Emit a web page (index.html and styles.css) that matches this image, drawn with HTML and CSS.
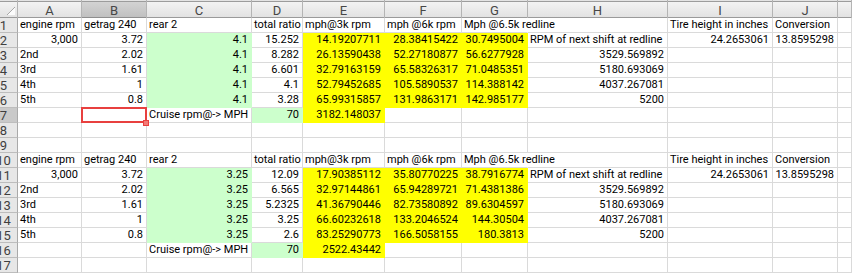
FILE: index.html
```html
<!DOCTYPE html>
<html>
<head>
<meta charset="utf-8">
<link rel="stylesheet" href="styles.css">
</head>
<body>
<div class="sheet">
  <div class="corner"><i class="tri"></i></div>
  <div class="hd">A</div><div class="hd on">B</div><div class="hd">C</div><div class="hd">D</div><div class="hd">E</div><div class="hd">F</div><div class="hd">G</div><div class="hd">H</div><div class="hd">I</div><div class="hd">J</div><div class="hd"></div>

  <div class="rh"><span>1</span></div>
  <div class="c">engine rpm</div><div class="c">getrag 240</div><div class="c">rear 2</div><div class="c">total ratio</div><div class="c">mph@3k rpm</div><div class="c">mph @6k rpm</div><div class="c spill">Mph @6.5k redline</div><div class="c"></div><div class="c">Tire height in inches</div><div class="c">Conversion</div><div class="c"></div>

  <div class="rh"><span>2</span></div>
  <div class="c n">3,000</div><div class="c n">3.72</div><div class="c n g">4.1</div><div class="c n">15.252</div><div class="c n y">14.19207711</div><div class="c n y">28.38415422</div><div class="c n y">30.7495004</div><div class="c">RPM of next shift at redline</div><div class="c n">24.2653061</div><div class="c n">13.8595298</div><div class="c"></div>

  <div class="rh"><span>3</span></div>
  <div class="c">2nd</div><div class="c n">2.02</div><div class="c n g">4.1</div><div class="c n">8.282</div><div class="c n y">26.13590438</div><div class="c n y">52.27180877</div><div class="c n y">56.6277928</div><div class="c n">3529.569892</div><div class="c"></div><div class="c"></div><div class="c"></div>

  <div class="rh"><span>4</span></div>
  <div class="c">3rd</div><div class="c n">1.61</div><div class="c n g">4.1</div><div class="c n">6.601</div><div class="c n y">32.79163159</div><div class="c n y">65.58326317</div><div class="c n y">71.0485351</div><div class="c n">5180.693069</div><div class="c"></div><div class="c"></div><div class="c"></div>

  <div class="rh"><span>5</span></div>
  <div class="c">4th</div><div class="c n">1</div><div class="c n g">4.1</div><div class="c n">4.1</div><div class="c n y">52.79452685</div><div class="c n y">105.5890537</div><div class="c n y">114.388142</div><div class="c n">4037.267081</div><div class="c"></div><div class="c"></div><div class="c"></div>

  <div class="rh"><span>6</span></div>
  <div class="c">5th</div><div class="c n">0.8</div><div class="c n g">4.1</div><div class="c n">3.28</div><div class="c n y">65.99315857</div><div class="c n y">131.9863171</div><div class="c n y">142.985177</div><div class="c n">5200</div><div class="c"></div><div class="c"></div><div class="c"></div>

  <div class="rh on"><span>7</span></div>
  <div class="c"></div><div class="c sel"><i class="box"></i><i class="handle"></i></div><div class="c">Cruise rpm@-&gt; MPH</div><div class="c n g">70</div><div class="c n y">3182.148037</div><div class="c"></div><div class="c"></div><div class="c"></div><div class="c"></div><div class="c"></div><div class="c"></div>

  <div class="rh"><span>8</span></div>
  <div class="c"></div><div class="c"></div><div class="c"></div><div class="c"></div><div class="c"></div><div class="c"></div><div class="c"></div><div class="c"></div><div class="c"></div><div class="c"></div><div class="c"></div>

  <div class="rh"><span>9</span></div>
  <div class="c"></div><div class="c"></div><div class="c"></div><div class="c"></div><div class="c"></div><div class="c"></div><div class="c"></div><div class="c"></div><div class="c"></div><div class="c"></div><div class="c"></div>

  <div class="rh"><span>10</span></div>
  <div class="c">engine rpm</div><div class="c">getrag 240</div><div class="c">rear 2</div><div class="c">total ratio</div><div class="c">mph@3k rpm</div><div class="c">mph @6k rpm</div><div class="c spill">Mph @6.5k redline</div><div class="c"></div><div class="c">Tire height in inches</div><div class="c">Conversion</div><div class="c"></div>

  <div class="rh"><span>11</span></div>
  <div class="c n">3,000</div><div class="c n">3.72</div><div class="c n g">3.25</div><div class="c n">12.09</div><div class="c n y">17.90385112</div><div class="c n y">35.80770225</div><div class="c n y">38.7916774</div><div class="c">RPM of next shift at redline</div><div class="c n">24.2653061</div><div class="c n">13.8595298</div><div class="c"></div>

  <div class="rh"><span>12</span></div>
  <div class="c">2nd</div><div class="c n">2.02</div><div class="c n g">3.25</div><div class="c n">6.565</div><div class="c n y">32.97144861</div><div class="c n y">65.94289721</div><div class="c n y">71.4381386</div><div class="c n">3529.569892</div><div class="c"></div><div class="c"></div><div class="c"></div>

  <div class="rh"><span>13</span></div>
  <div class="c">3rd</div><div class="c n">1.61</div><div class="c n g">3.25</div><div class="c n">5.2325</div><div class="c n y">41.36790446</div><div class="c n y">82.73580892</div><div class="c n y">89.6304597</div><div class="c n">5180.693069</div><div class="c"></div><div class="c"></div><div class="c"></div>

  <div class="rh"><span>14</span></div>
  <div class="c">4th</div><div class="c n">1</div><div class="c n g">3.25</div><div class="c n">3.25</div><div class="c n y">66.60232618</div><div class="c n y">133.2046524</div><div class="c n y">144.30504</div><div class="c n">4037.267081</div><div class="c"></div><div class="c"></div><div class="c"></div>

  <div class="rh"><span>15</span></div>
  <div class="c">5th</div><div class="c n">0.8</div><div class="c n g">3.25</div><div class="c n">2.6</div><div class="c n y">83.25290773</div><div class="c n y">166.5058155</div><div class="c n y">180.3813</div><div class="c n">5200</div><div class="c"></div><div class="c"></div><div class="c"></div>

  <div class="rh"><span>16</span></div>
  <div class="c"></div><div class="c"></div><div class="c">Cruise rpm@-&gt; MPH</div><div class="c n g">70</div><div class="c n y">2522.43442</div><div class="c"></div><div class="c"></div><div class="c"></div><div class="c"></div><div class="c"></div><div class="c"></div>

  <div class="rh"><span>17</span></div>
  <div class="c"></div><div class="c"></div><div class="c"></div><div class="c"></div><div class="c"></div><div class="c"></div><div class="c"></div><div class="c"></div><div class="c"></div><div class="c"></div><div class="c"></div>
</div>
</body>
</html>
```

FILE: styles.css
```css
html, body {
  margin: 0;
  padding: 0;
  background: #ffffff;
  overflow: hidden;
}

.sheet {
  display: grid;
  grid-template-columns: 18px 64px 65px 105px 51px 82px 77px 66px 140px 105px 65px 1fr;
  grid-template-rows: 18px repeat(17, 15px);
  width: 852px;
  height: 274px;
  font-family: Roboto, "Liberation Sans", sans-serif;
  font-size: 11px;
  color: #000000;
  background: #ffffff;
}

.corner,
.hd {
  box-sizing: border-box;
  background: linear-gradient(to bottom, #e4e4e4 0, #e4e4e4 1px, #9c9c9c 1px, #9c9c9c 2px, #f3f3f3 2px, #e2e2e2 17px, #9a9a9a 17px, #9a9a9a 18px);
  border-right: 1px solid #b4b4b4;
}

.corner {
  display: flex;
  align-items: flex-end;
  justify-content: flex-end;
  padding: 0 2px 3px 0;
}

.tri {
  display: block;
  width: 9px;
  height: 9px;
  background: linear-gradient(135deg, transparent 0, transparent 50%, #a8a8a8 50%, #a8a8a8 58%, #fbfbfb 58%);
}

.hd {
  font-size: 13px;
  color: #474747;
  text-align: center;
  line-height: 19px;
  padding-top: 1px;
}

.hd.on {
  background: linear-gradient(to bottom, #e4e4e4 0, #e4e4e4 1px, #9c9c9c 1px, #9c9c9c 2px, #d3d3d3 2px, #c0c0c0 17px, #8e8e8e 17px, #8e8e8e 18px);
}

.rh {
  box-sizing: border-box;
  background: #e7e7e7;
  border-right: 1px solid #a9a9a9;
  border-bottom: 1px solid #bdbdbd;
  overflow: hidden;
  font-size: 13px;
  line-height: 15px;
  color: #3f3f3f;
}

.rh.on {
  background: #c9c9c9;
}

.rh span {
  display: block;
  width: 31px;
  margin-left: -12px;
  text-align: center;
}

.c {
  box-sizing: border-box;
  border-right: 1px solid #dadada;
  border-bottom: 1px solid #dadada;
  padding: 0 3px 0 2px;
  line-height: 14px;
  white-space: nowrap;
  overflow: hidden;
}

.n {
  text-align: right;
}

.g {
  background: #ccffcc;
  border-color: #ccffcc;
}

.y {
  background: #ffff00;
  border-color: #ffff00;
}

.spill {
  overflow: visible;
  border-right-color: #ffffff;
}

.sel {
  position: relative;
  overflow: visible;
  z-index: 2;
}

.box {
  position: absolute;
  left: -1px;
  top: -1px;
  width: 66px;
  height: 16px;
  box-sizing: border-box;
  border: 2px solid #e8403f;
}

.handle {
  position: absolute;
  right: -3px;
  bottom: -4px;
  width: 6px;
  height: 6px;
  box-sizing: border-box;
  background: #f27a76;
  border: 1px solid #e8403f;
}
```
